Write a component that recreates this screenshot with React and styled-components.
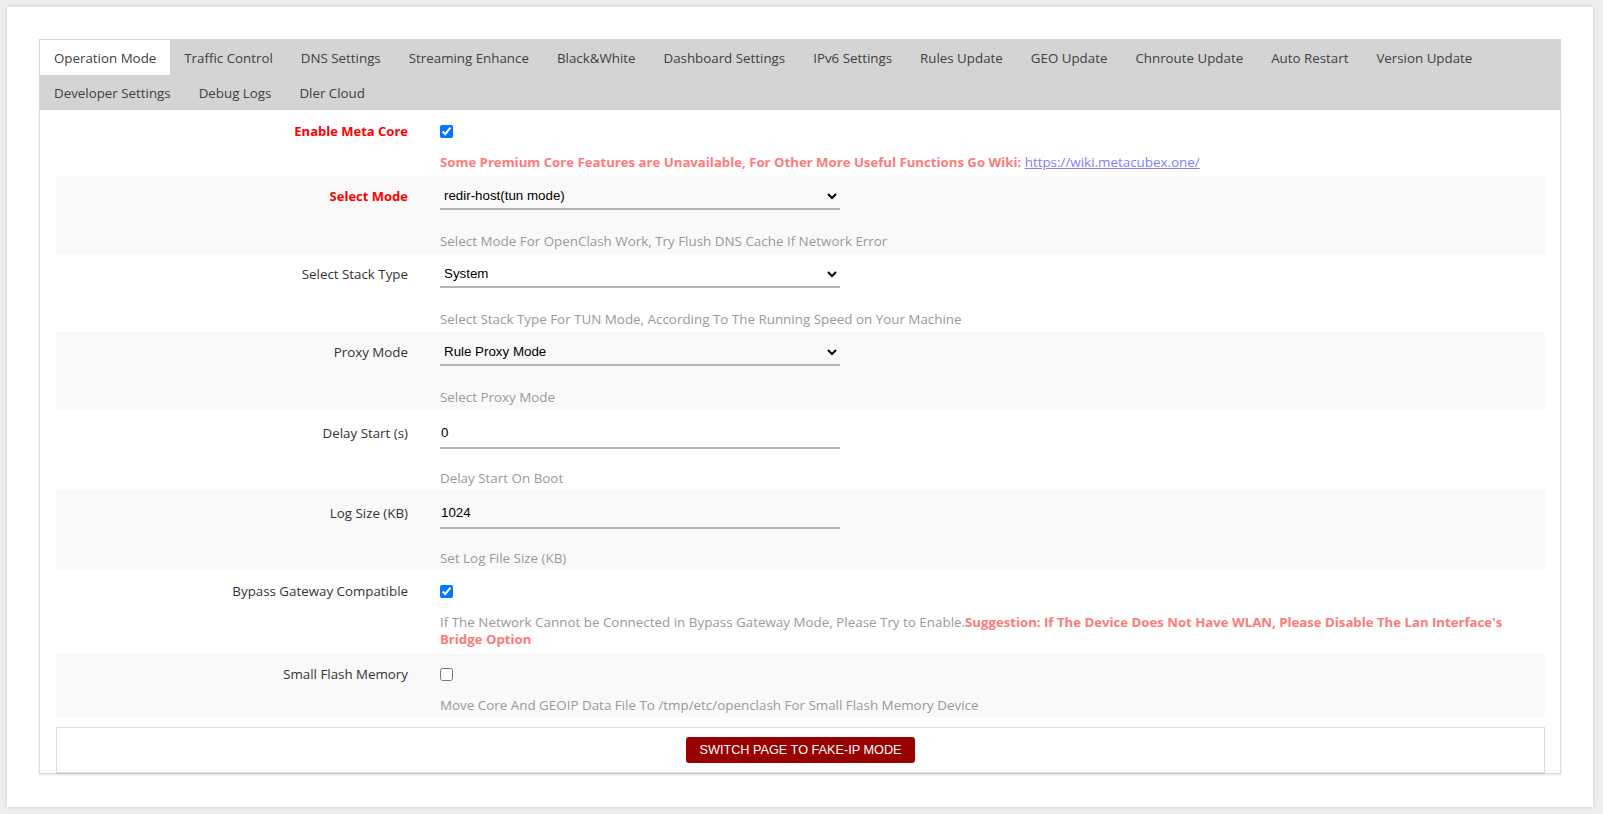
import styled, { createGlobalStyle } from "styled-components"

const GlobalStyle = createGlobalStyle`
    html, body {
        margin: 0;
        background: #eeeeee;
    }
    body {
        font-family: "Open Sans", "Noto Sans", sans-serif;
        color: #333;
    }
    * {
        box-sizing: border-box;
    }
`

const tabs = [
    "Operation Mode", "Traffic Control", "DNS Settings", "Streaming Enhance", "Black&White",
    "Dashboard Settings", "IPv6 Settings", "Rules Update", "GEO Update", "Chnroute Update",
    "Auto Restart", "Version Update", "Developer Settings", "Debug Logs", "Dler Cloud",
]

export default function App() {
    return (
        <>
            <GlobalStyle />
            <Card>
                <TabBar>
                    {tabs.map((t, i) => (
                        <Tab key={t} $active={i === 0}>{t}</Tab>
                    ))}
                </TabBar>
                <Panel>
                    <Row $kind="check">
                        <Label $kind="check" $red>Enable Meta Core</Label>
                        <Field>
                            <ControlLine $kind="check">
                                <Check type="checkbox" defaultChecked />
                            </ControlLine>
                            <Desc $kind="check">
                                <Warn>Some Premium Core Features are Unavailable, For Other More Useful Functions Go Wiki: </Warn>
                                <WikiLink href="#">https://wiki.metacubex.one/</WikiLink>
                            </Desc>
                        </Field>
                    </Row>
                    <Row $kind="select" $alt>
                        <Label $kind="select" $red>Select Mode</Label>
                        <Field>
                            <ControlLine $kind="select">
                                <Select defaultValue="redir-host-tun">
                                    <option value="redir-host-tun">redir-host(tun mode)</option>
                                </Select>
                            </ControlLine>
                            <Desc $kind="select">Select Mode For OpenClash Work, Try Flush DNS Cache If Network Error</Desc>
                        </Field>
                    </Row>
                    <Row $kind="select">
                        <Label $kind="select">Select Stack Type</Label>
                        <Field>
                            <ControlLine $kind="select">
                                <Select defaultValue="system">
                                    <option value="system">System</option>
                                </Select>
                            </ControlLine>
                            <Desc $kind="select">Select Stack Type For TUN Mode, According To The Running Speed on Your Machine</Desc>
                        </Field>
                    </Row>
                    <Row $kind="select" $alt>
                        <Label $kind="select">Proxy Mode</Label>
                        <Field>
                            <ControlLine $kind="select">
                                <Select defaultValue="rule">
                                    <option value="rule">Rule Proxy Mode</option>
                                </Select>
                            </ControlLine>
                            <Desc $kind="select">Select Proxy Mode</Desc>
                        </Field>
                    </Row>
                    <Row $kind="input">
                        <Label $kind="input">Delay Start (s)</Label>
                        <Field>
                            <ControlLine $kind="input">
                                <TextInput defaultValue="0" />
                            </ControlLine>
                            <Desc $kind="input">Delay Start On Boot</Desc>
                        </Field>
                    </Row>
                    <Row $kind="input" $alt>
                        <Label $kind="input">Log Size (KB)</Label>
                        <Field>
                            <ControlLine $kind="input">
                                <TextInput defaultValue="1024" />
                            </ControlLine>
                            <Desc $kind="input">Set Log File Size (KB)</Desc>
                        </Field>
                    </Row>
                    <Row $kind="check">
                        <Label $kind="check">Bypass Gateway Compatible</Label>
                        <Field>
                            <ControlLine $kind="check">
                                <Check type="checkbox" defaultChecked />
                            </ControlLine>
                            <Desc $kind="check">
                                If The Network Cannot be Connected in Bypass Gateway Mode, Please Try to Enable.
                                <Warn>Suggestion: If The Device Does Not Have WLAN, Please Disable The Lan Interface's Bridge Option</Warn>
                            </Desc>
                        </Field>
                    </Row>
                    <Row $kind="check" $alt $tight>
                        <Label $kind="check">Small Flash Memory</Label>
                        <Field>
                            <ControlLine $kind="check">
                                <Check type="checkbox" />
                            </ControlLine>
                            <Desc $kind="check">Move Core And GEOIP Data File To /tmp/etc/openclash For Small Flash Memory Device</Desc>
                        </Field>
                    </Row>
                    <ButtonBox>
                        <SwitchButton>SWITCH PAGE TO FAKE-IP MODE</SwitchButton>
                    </ButtonBox>
                </Panel>
            </Card>
        </>
    )
}

const controlHeight = { check: 14, select: 28, input: 31 }
const rowPadding = { check: "14px 0 5px", select: "6px 0 4px", input: "8px 0 3px" }
const descGap = { check: 16, select: 23, input: 21 }

const Card = styled.div`
    margin: 7px 10px 7px 7px;
    height: 800px;
    background: #ffffff;
    box-shadow: 0 0 3px rgba(0, 0, 0, 0.18);
    padding: 32px 32px 0 32px;
`

const TabBar = styled.ul`
    list-style: none;
    margin: 0;
    padding: 1px 0 0 1px;
    display: flex;
    flex-wrap: wrap;
    background: #d4d4d4;
`

const Tab = styled.li`
    height: 35px;
    padding: 2px 14px 0;
    line-height: 33px;
    font-size: 13.33px;
    color: #404040;
    white-space: nowrap;
    background: ${p => (p.$active ? "#ffffff" : "transparent")};
`

const Panel = styled.div`
    border: 1px solid #dcdcdc;
    border-top: none;
    box-shadow: 0 1px 2px rgba(0, 0, 0, 0.12);
    padding: 0 15px 0 16px;
`

const Row = styled.div`
    display: flex;
    background: ${p => (p.$alt ? "#f9f9f9" : "transparent")};
    padding: ${p => (p.$tight ? "14px 0 3px" : rowPadding[p.$kind])};
`

const Label = styled.label`
    width: 352px;
    flex-shrink: 0;
    margin-right: 32px;
    text-align: right;
    font-size: ${p => (p.$red ? "13px" : "13.33px")};
    height: ${p => controlHeight[p.$kind]}px;
    line-height: ${p => controlHeight[p.$kind]}px;
    color: ${p => (p.$red ? "#ff0000" : "#333333")};
    font-weight: ${p => (p.$red ? 700 : 400)};
    white-space: nowrap;
`

const Field = styled.div`
    flex: 1;
    display: flex;
    flex-direction: column;
    min-width: 0;
`

const ControlLine = styled.div`
    height: ${p => controlHeight[p.$kind]}px;
    display: flex;
    align-items: ${p => (p.$kind === "check" ? "center" : "stretch")};
`

const Check = styled.input`
    margin: 0;
    width: 13px;
    height: 13px;
`

const Select = styled.select`
    width: 400px;
    height: 100%;
    border: none;
    border-bottom: 2px solid #b5b5b5;
    background: transparent;
    font-family: "Liberation Sans", Arial, sans-serif;
    font-size: 13.33px;
    color: #000;
    padding: 0;
    outline: none;
`

const TextInput = styled.input`
    width: 400px;
    height: 100%;
    border: none;
    border-bottom: 2px solid #b5b5b5;
    background: transparent;
    font-family: "Liberation Sans", Arial, sans-serif;
    font-size: 13.33px;
    color: #000;
    padding: 0 0 0 1px;
    outline: none;
`

const Desc = styled.div`
    margin-top: ${p => descGap[p.$kind]}px;
    font-size: 13.4px;
    line-height: 17px;
    color: #9a9a9a;
`

const Warn = styled.b`
    color: #ff7b7b;
    font-weight: 700;
    font-size: 13.2px;
`

const WikiLink = styled.a`
    color: #8080ff;
    text-decoration: underline;
`

const ButtonBox = styled.div`
    margin-top: 10px;
    height: 46px;
    border: 1px solid #dcdcdc;
    box-shadow: 0 1px 1px rgba(0, 0, 0, 0.08);
    display: flex;
    justify-content: center;
    align-items: center;
`

const SwitchButton = styled.button`
    height: 26px;
    padding: 0 13px;
    border: none;
    border-radius: 3px;
    background: #990000;
    color: #ffffff;
    font-family: "Liberation Sans", Arial, sans-serif;
    font-size: 12.7px;
    cursor: pointer;
`
